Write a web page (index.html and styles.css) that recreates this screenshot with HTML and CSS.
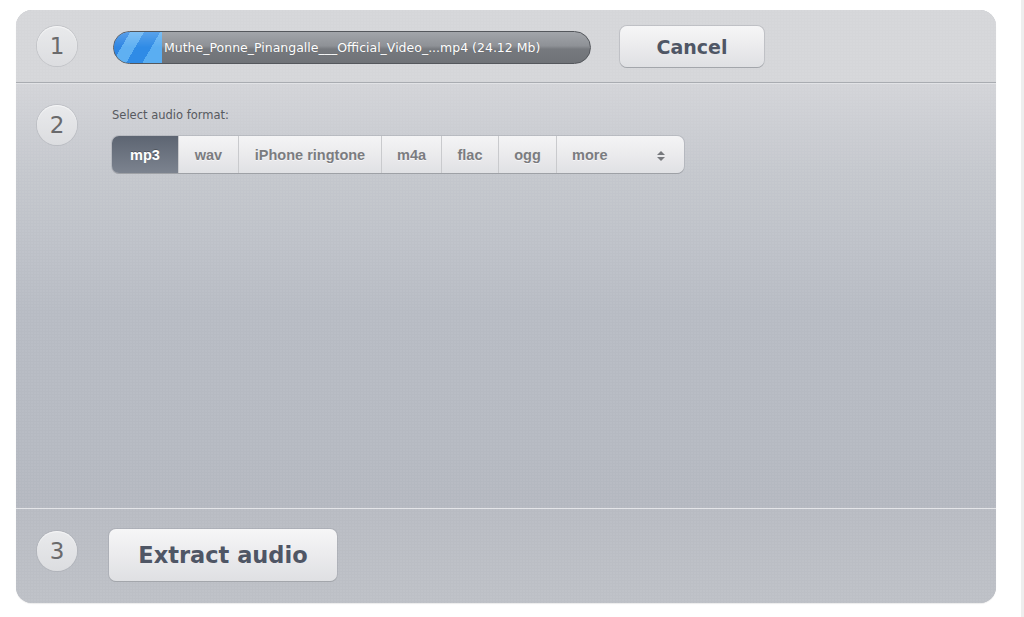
FILE: index.html
```html
<!DOCTYPE html>
<html>
<head>
<meta charset="utf-8">
<link rel="stylesheet" href="styles.css">
</head>
<body>
<div class="panel">
  <section class="step step-1">
    <div class="num">1</div>
    <div class="progress">
      <div class="progress-fill"></div>
      <span class="progress-text">Muthe_Ponne_Pinangalle___Official_Video_...mp4 (24.12 Mb)</span>
    </div>
    <button class="btn btn-cancel">Cancel</button>
  </section>
  <section class="step step-2">
    <div class="num">2</div>
    <div class="format">
      <div class="label">Select audio format:</div>
      <div class="seg">
        <div class="seg-item active">mp3</div>
        <div class="seg-item">wav</div>
        <div class="seg-item">iPhone ringtone</div>
        <div class="seg-item">m4a</div>
        <div class="seg-item">flac</div>
        <div class="seg-item">ogg</div>
        <div class="seg-item more"><span>more</span>
          <svg class="updown" width="10" height="14" viewBox="0 0 10 14"><path d="M1 6 L5 2 L9 6 Z M1 8 L5 12 L9 8 Z" fill="#77797d"/></svg>
        </div>
      </div>
    </div>
  </section>
  <section class="step step-3">
    <div class="num">3</div>
    <button class="btn btn-extract">Extract audio</button>
  </section>
</div>
</body>
</html>
```
FILE: styles.css
```css
html, body { margin: 0; padding: 0; }
body {
  width: 1024px;
  height: 617px;
  overflow: hidden;
  background: linear-gradient(to left, #eeeeee 0, #eeeeee 3px, #ffffff 3px);
  padding: 10px 0 0 16px;
  box-sizing: border-box;
  font-family: "DejaVu Sans", Verdana, sans-serif;
}
.panel {
  width: 980px;
  height: 593px;
  border-radius: 16px;
  overflow: hidden;
  display: flex;
  flex-direction: column;
  background: #bbbec5;
  box-shadow: 0 1px 1px rgba(0,0,0,0.08);
}
.step {
  display: flex;
  align-items: flex-start;
  padding-left: 21px;
  box-sizing: border-box;
}
.step-1 {
  height: 73px;
  padding-top: 16px;
  background: radial-gradient(circle at 1px 1px, rgba(255,255,255,0.12) 0.6px, transparent 0.8px) 0 0 / 3px 3px,
    #d5d6d9;
  border-bottom: 1px solid #a9acb1;
  box-shadow: 0 1px 0 #e2e3e6;
  position: relative;
  z-index: 1;
}
.step-2 {
  flex: 1;
  padding-top: 22px;
  background: radial-gradient(circle at 1px 1px, rgba(255,255,255,0.1) 0.6px, transparent 0.8px) 0 0 / 3px 3px,
    linear-gradient(to bottom, #d3d4d8 0, #c4c7cd 90px, #b7bbc3 230px, #b4b8c0 424px);
  border-bottom: 1px solid #e4e5e8;
}
.step-3 {
  height: 94px;
  padding-top: 20px;
  background: radial-gradient(circle at 1px 1px, rgba(255,255,255,0.1) 0.6px, transparent 0.8px) 0 0 / 3px 3px,
    linear-gradient(to bottom, #b8bbc2, #bdc0c6);
}
.num {
  width: 40px;
  height: 40px;
  border-radius: 50%;
  flex: none;
  background: linear-gradient(to bottom, #e9eaec, #dcdde0);
  box-shadow: 0 0 0 1px rgba(160,163,170,0.35), inset 0 1px 1px rgba(255,255,255,0.6);
  display: flex;
  align-items: center;
  justify-content: center;
  font-size: 23px;
  color: #6a6a6c;
  font-weight: normal;
}
.step-3 .num { margin-top: 2px; }

.progress {
  margin-left: 36px;
  margin-top: 5px;
  width: 478px;
  height: 33px;
  box-sizing: border-box;
  border: 1px solid #54575c;
  border-radius: 17px;
  overflow: hidden;
  display: flex;
  align-items: center;
  background: linear-gradient(to bottom, #a2a5aa 0, #8e9196 45%, #76797e 55%, #6f7277 100%);
}
.progress-fill {
  width: 48px;
  height: 100%;
  flex: none;
  background:
    linear-gradient(to bottom, rgba(255,255,255,0.2), rgba(255,255,255,0) 50%),
    linear-gradient(120deg, #2e86e4 0 14px, #5fb0f2 14px 26px, #2f8be6 26px 40px, #5aaef2 40px);
}
.progress-text {
  padding-left: 2px;
  font-size: 12.5px;
  color: #ffffff;
  white-space: nowrap;
  text-shadow: 0 0 1px rgba(0,0,0,0.25);
}
.btn {
  font-family: "DejaVu Sans", Verdana, sans-serif;
  font-weight: bold;
  color: #4f5665;
  border: none;
  border-radius: 7px;
  background: linear-gradient(to bottom, #f6f6f7 0, #ebebed 50%, #dfe0e3 100%);
  box-shadow: 0 1px 0 #a3a6ab, 0 0 0 1px rgba(150,153,160,0.35);
  cursor: pointer;
  padding: 0;
}
.btn-cancel {
  margin-left: 29px;
  width: 144px;
  height: 41px;
  font-size: 19px;
}
.btn-extract {
  margin-left: 32px;
  width: 228px;
  height: 52px;
  font-size: 22.5px;
}
.format {
  margin-left: 35px;
  display: flex;
  flex-direction: column;
}
.label {
  font-size: 11.5px;
  color: #575a60;
  margin-top: 3px;
  margin-left: 0;
  height: 17px;
}
.seg {
  margin-top: 11px;
  display: grid;
  grid-template-columns: 66px 60px 143px 60px 57px 58px 128px;
  height: 37px;
  border-radius: 7px;
  overflow: hidden;
  box-shadow: 0 1px 0 #9ea1a6, 0 0 0 1px rgba(150,153,160,0.35);
}
.seg-item {
  display: flex;
  align-items: center;
  justify-content: center;
  font-family: "Liberation Sans", Arial, sans-serif;
  font-weight: bold;
  font-size: 14.5px;
  color: #7b7c80;
  text-shadow: 0 1px 0 rgba(255,255,255,0.6);
  background: linear-gradient(to bottom, #f4f4f5 0, #ebebed 50%, #e0e1e4 100%);
  border-left: 1px solid #c9cacd;
}
.seg-item:first-child { border-left: none; }
.seg-item.active {
  color: #ffffff;
  background: linear-gradient(to bottom, #5d6572, #7c838f);
  text-shadow: 0 -1px 0 rgba(0,0,0,0.25);
}
.seg-item.more {
  justify-content: space-between;
  padding: 0 18px 0 15px;
}
.updown { margin-top: 2px; }
```
